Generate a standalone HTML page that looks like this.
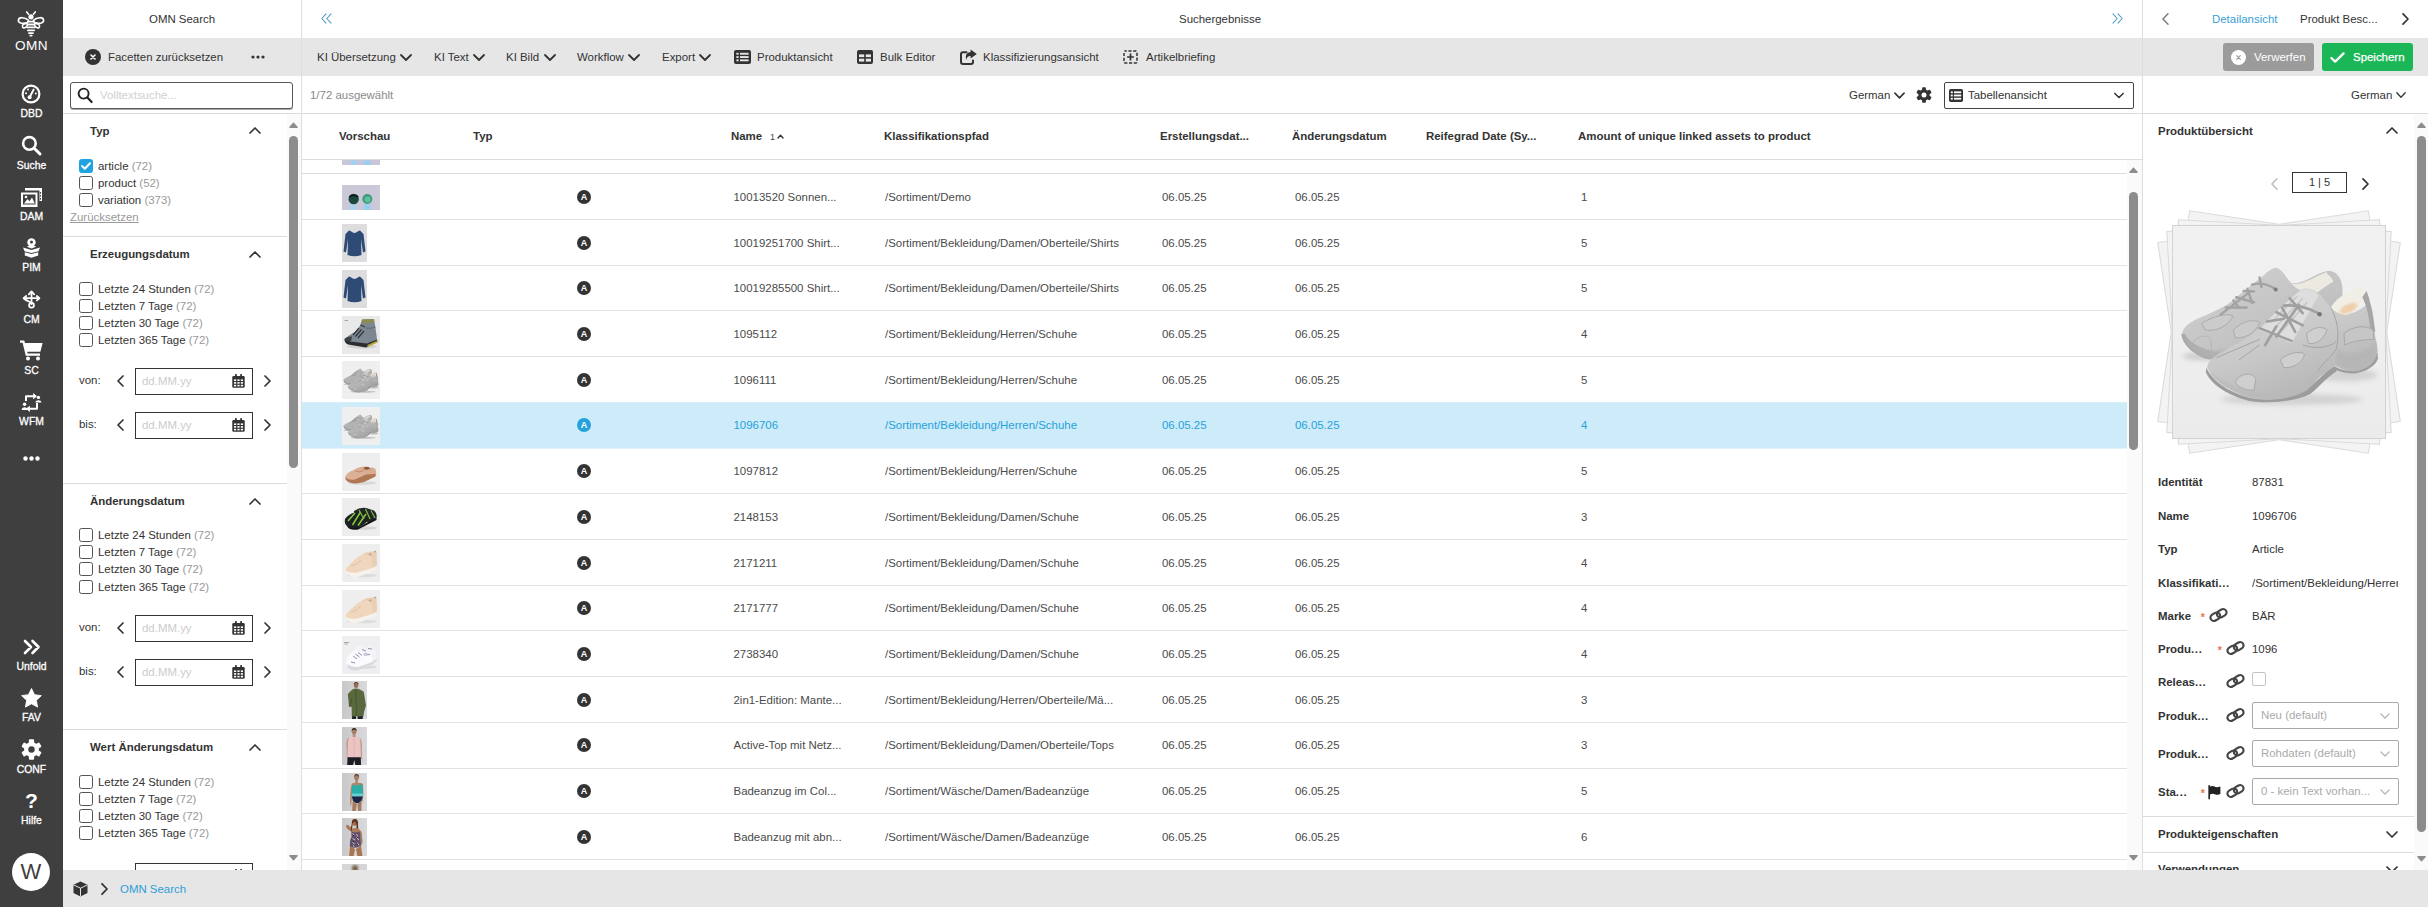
<!DOCTYPE html>
<html lang="de">
<head>
<meta charset="utf-8">
<title>OMN Search</title>
<style>
*{box-sizing:border-box;margin:0;padding:0}
html,body{width:2428px;height:907px;overflow:hidden;background:#fff}
body{font-family:"Liberation Sans",sans-serif;font-size:11.45px;color:#333;position:relative}
.abs{position:absolute}
.t{position:absolute;white-space:nowrap;line-height:14px;height:14px}
.b{font-weight:bold}
.g{color:#999}
svg{position:absolute;overflow:visible}
#sb{position:absolute;left:0;top:0;width:63px;height:907px;background:#3f3f3f;color:#fff}
#sb .l{position:absolute;left:0;width:63px;text-align:center;font-size:10.4px;line-height:13px;color:#fff;-webkit-text-stroke:.3px #fff}
#topline{position:absolute;left:63px;top:0;width:2365px;height:38px;background:#fff}
#toolbar{position:absolute;left:63px;top:38px;width:2365px;height:38px;background:#e6e6e6}
#bottom{position:absolute;left:63px;top:870px;width:2365px;height:37px;background:#e6e6e6}
.vline{position:absolute;top:0;width:1px;height:870px;background:#dedede}
.hline{position:absolute;height:1px;background:#dcdcdc}
.cb{position:absolute;width:14px;height:14px;border:1px solid #555;border-radius:2.5px;background:#fff}
.cb.on{background:#1ea3e0;border-color:#1ea3e0}
.dbox{position:absolute;left:135px;width:118px;height:27px;border:1px solid #333;background:#fff}
.row{position:absolute;left:302px;width:1825px;height:46px;border-bottom:1px solid #e2e2e2;color:#4a4a4a}
.row.sel{background:#cdebf8;color:#26a2db;border-bottom-color:#e4f1f7;box-shadow:0 -1px 0 #d9eef8}
.tyi{position:absolute;left:275px;top:15px;width:14px;height:14px;border-radius:50%;background:#333;color:#fff;font-size:9px;font-weight:bold;line-height:14px;text-align:center}
.row.sel .tyi{background:#26a2db}
.th{position:absolute;font-weight:bold;white-space:nowrap;top:129px;line-height:14px}
.sel2{position:absolute;left:2252px;width:147px;height:27px;border:1px solid #aaa;border-radius:2px;background:#fff;color:#aaa;line-height:25px;padding-left:8px}
</style>
</head>
<body>
<div id="topline"></div>
<div id="toolbar"></div>
<div id="bottom"><svg style="left:10px;top:11px" width="15" height="16" viewBox="0 0 15 16"><path d="M7.500 .5 L14.500 3.800 V12 L7.500 15.500 L.5 12 V3.800 Z" fill="#333"/><path d="M.8 4 L7.500 7.200 L14.200 4 M7.500 7.200 V15.200" stroke="#e6e6e6" stroke-width="1" fill="none"/></svg><svg style="left:38px;top:13px" width="7" height="12" viewBox="0 0 7 12" fill="none" stroke="#333" stroke-width="1.8" stroke-linecap="round" stroke-linejoin="round"><path d="M1 .8 L6 6 L1 11.2"/></svg><div class="t" style="left:57px;top:12px;color:#2d9fd6">OMN Search</div></div>
<div id="sb">
<svg style="left:17px;top:11px" width="28" height="27" viewBox="0 0 30 29" preserveAspectRatio="none" fill="none" stroke="#fff" stroke-width="1.700" stroke-linecap="round">
<path d="M12.400 3.400 L10.400 1 M17.600 3.400 L19.600 1"/>
<circle cx="15" cy="6.200" r="2.800" fill="#fff" stroke="none"/>
<path d="M12.500 10 C8.500 6.500 2 6 1.500 9.800 C1.100 13.200 6.500 14.200 11.500 12.400"/>
<path d="M17.500 10 C21.500 6.500 28 6 28.500 9.800 C28.900 13.200 23.500 14.200 18.500 12.400"/>
<path d="M11 13 C7.500 13.300 5 15 6 17.200 C7 19 9.800 18 11 15.800"/>
<path d="M19 13 C22.500 13.300 25 15 24 17.200 C23 19 20.200 18 19 15.800"/>
<path d="M11.600 11.400 H18.400 M11 14.500 H19 M11 17.600 H19 M11.600 20.700 H18.400 M12.800 23.700 H17.200 M14.200 26.400 H15.800" stroke-width="1.900"/>
</svg>
<div class="l" style="top:38px;font-size:13.6px;line-height:16px;letter-spacing:.5px;-webkit-text-stroke:0">OMN</div>
<svg style="left:21px;top:84px" width="20" height="20" viewBox="0 0 20 20" fill="none" stroke="#fff">
<circle cx="10" cy="10" r="8.4" stroke-width="2.2"/>
<path d="M8.8 13 L12.6 5.6" stroke-width="2" stroke-linecap="round"/>
<circle cx="8.6" cy="13.2" r="2" fill="#fff" stroke="none"/>
<circle cx="5" cy="9.2" r="1" fill="#fff" stroke="none"/><circle cx="7" cy="5.6" r="1" fill="#fff" stroke="none"/><circle cx="14.8" cy="9.4" r="1" fill="#fff" stroke="none"/>
</svg>
<div class="l" style="top:107px">DBD</div>
<svg style="left:21px;top:135px" width="21" height="21" viewBox="0 0 21 21" fill="none" stroke="#fff" stroke-linecap="round">
<circle cx="8.4" cy="8.4" r="6.3" stroke-width="2.6"/><path d="M13.2 13.2 L19 19" stroke-width="3"/>
</svg>
<div class="l" style="top:158.500px">Suche</div>
<svg style="left:21px;top:188px" width="21" height="19" viewBox="0 0 21 19" fill="#fff">
<path d="M4 0 H21 V13 H18.5 V2.5 H4 Z"/>
<path d="M0 4.5 H16.5 V19 H0 Z M2 6.5 V16.5 H14.5 V6.5 Z" fill-rule="evenodd"/>
<path d="M3 15.5 L6.5 11 L8.5 13.2 L11 9.5 L13.8 15.5 Z"/><circle cx="5" cy="9" r="1.3"/>
<rect x="19" y="4" width="1" height="1.6" fill="#3f3f3f"/><rect x="19" y="7" width="1" height="1.6" fill="#3f3f3f"/><rect x="19" y="10" width="1" height="1.6" fill="#3f3f3f"/>
</svg>
<div class="l" style="top:209.500px">DAM</div>
<svg style="left:22px;top:238px" width="19" height="20" viewBox="0 0 19 20" fill="#fff">
<circle cx="9.5" cy="4.4" r="4.2"/><circle cx="9.5" cy="4" r="1.5" fill="#3f3f3f"/>
<path d="M1 9.5 L9.5 12 L18 9.5 L16.5 13.2 L9.5 15 L2.5 13.2 Z"/>
<path d="M2.8 14.2 L9.5 16 L16.2 14.2 V17.6 L9.5 19.8 L2.8 17.6 Z"/>
<path d="M5.5 9 L9.5 10.4 L13.5 9 L13.5 8 L5.5 8Z"/>
</svg>
<div class="l" style="top:260.500px">PIM</div>
<svg style="left:22px;top:290px" width="19" height="19" viewBox="0 0 19 19" fill="none" stroke="#fff" stroke-width="1.8" stroke-linecap="round" stroke-linejoin="round">
<path d="M9.5 2 V14"/><path d="M6.8 4.4 L9.5 1.4 L12.2 4.4" /><path d="M2.2 8.2 H16.8"/><path d="M4.2 6 L1.6 8.2 L4.2 10.4 M14.8 6 L17.4 8.2 L14.8 10.4"/>
<circle cx="9.5" cy="15.2" r="2.4"/>
<path d="M4 8.5 C4 12 9 11 9.2 13"/>
</svg>
<div class="l" style="top:312.500px">CM</div>
<svg style="left:20px;top:340px" width="23" height="21" viewBox="0 0 23 21" fill="#fff">
<path d="M0 0.6 H4.2 L5 3 H22.6 L20.4 11.8 H7.2 L7.6 13.6 H20 V15.8 H5.8 L2.6 2.8 H0 Z"/>
<circle cx="8" cy="18.6" r="2"/><circle cx="18" cy="18.6" r="2"/>
</svg>
<div class="l" style="top:363.500px">SC</div>
<svg style="left:21px;top:393px" width="21" height="19" viewBox="0 0 21 19" fill="none" stroke="#fff" stroke-width="2" stroke-linejoin="round">
<path d="M5 8 V3.2 H14.5"/><path d="M12.2 0.6 L15.4 3.2 L12.2 5.8" fill="#fff" stroke-width="1"/>
<path d="M16 10 V15.8 H6.5"/><path d="M8.8 13.2 L5.6 15.8 L8.8 18.4" fill="#fff" stroke-width="1"/>
<circle cx="3.6" cy="11.2" r="1.7" fill="#fff" stroke="none"/><path d="M0.6 17 C0.6 13.4 6.6 13.4 6.6 17 Z" fill="#fff" stroke="none"/>
<circle cx="17.4" cy="4.4" r="1.7" fill="#fff" stroke="none"/><path d="M14.4 9.6 C14.4 6.4 20.4 6.4 20.4 9.6 Z" fill="#fff" stroke="none"/>
</svg>
<div class="l" style="top:414.500px">WFM</div>
<svg style="left:23px;top:456px" width="17" height="5" viewBox="0 0 17 5" fill="#fff"><circle cx="2.5" cy="2.5" r="2.2"/><circle cx="8.5" cy="2.5" r="2.2"/><circle cx="14.5" cy="2.5" r="2.2"/></svg>
<svg style="left:23px;top:639px" width="17" height="16" viewBox="0 0 17 16" fill="none" stroke="#fff" stroke-width="2.6" stroke-linecap="round" stroke-linejoin="round"><path d="M2 2 L8 8 L2 14 M9.5 2 L15.5 8 L9.5 14"/></svg>
<div class="l" style="top:660px">Unfold</div>
<svg style="left:21px;top:688px" width="21" height="20" viewBox="0 0 23 22" fill="#fff"><path d="M11.5 0.6 L14.8 7.4 L22.3 8.4 L16.8 13.6 L18.2 21 L11.5 17.4 L4.8 21 L6.2 13.6 L0.7 8.4 L8.2 7.4 Z" stroke="#fff" stroke-width="1" stroke-linejoin="round"/></svg>
<div class="l" style="top:711px">FAV</div>
<svg style="left:21px;top:739px" width="21" height="21" viewBox="-10.5 -10.5 21 21" fill="#fff">
<g><rect x="-2.6" y="-10.2" width="5.2" height="20.4" rx="1"/><rect x="-2.6" y="-10.2" width="5.2" height="20.4" rx="1" transform="rotate(60)"/><rect x="-2.6" y="-10.2" width="5.2" height="20.4" rx="1" transform="rotate(120)"/></g>
<circle r="7.4"/><circle r="3.2" fill="#3f3f3f"/>
</svg>
<div class="l" style="top:762.500px">CONF</div>
<div class="l" style="top:789px;font-size:21px;line-height:24px;font-weight:bold;-webkit-text-stroke:0">?</div>
<div class="l" style="top:814px">Hilfe</div>
<div class="abs" style="left:12px;top:853px;width:38px;height:38px;border-radius:50%;background:#fff;color:#3f3f3f;text-align:center;font-size:22px;line-height:38px">W</div>
</div>
<div class="vline" style="left:301px"></div>
<div class="vline" style="left:2142px"></div>
<div class="hline" style="left:63px;top:113px;width:2365px"></div>
<div id="left" class="abs" style="left:0;top:0;width:301px;height:870px;overflow:hidden"><div class="t" style="left:149px;top:12px">OMN Search</div>
<div class="abs" style="left:85px;top:49px;width:16px;height:16px;border-radius:50%;background:#333"></div>
<svg style="left:90px;top:54px" width="6" height="6" viewBox="0 0 6 6" stroke="#fff" stroke-width="1.6" stroke-linecap="round"><path d="M1 1 L5 5 M5 1 L1 5"/></svg>
<div class="t" style="left:108px;top:50px">Facetten zurücksetzen</div>
<svg style="left:251px;top:55px" width="14" height="4" viewBox="0 0 14 4" fill="#333"><circle cx="2" cy="2" r="1.6"/><circle cx="7" cy="2" r="1.6"/><circle cx="12" cy="2" r="1.6"/></svg>
<div class="abs" style="left:70px;top:82px;width:223px;height:27px;border:1px solid #585858;border-radius:3px;background:#fff;box-shadow:0 1px 0 #aaa"></div>
<svg style="left:77px;top:87px" width="16" height="17" viewBox="0 0 16 17" fill="none" stroke="#222" stroke-linecap="round"><circle cx="6.6" cy="6.6" r="5" stroke-width="1.9"/><path d="M10.4 10.6 L14.6 15" stroke-width="2.2"/></svg>
<div class="t" style="left:100px;top:88px;color:#d0d0d0">Volltextsuche...</div>
<div class="abs" style="left:287px;top:114px;width:14px;height:756px;background:#fafafa"></div>
<div class="abs" style="left:289px;top:136px;width:9px;height:332px;border-radius:4.5px;background:#8c8c8c"></div>
<svg style="left:289px;top:122px" width="9" height="6" viewBox="0 0 9 6" fill="#8c8c8c"><path d="M4.5 0.3 L8.8 5 Q8.8 6 8 6 H1 Q.2 6 .2 5 Z"/></svg>
<svg style="left:289px;top:855px" width="9" height="6" viewBox="0 0 9 6" fill="#8c8c8c"><path d="M4.5 5.7 L8.8 1 Q8.8 0 8 0 H1 Q.2 0 .2 1 Z"/></svg>
<div class="t b" style="left:90px;top:124px">Typ</div>
<svg style="left:249px;top:127px" width="12" height="7" viewBox="0 0 12 7" fill="none" stroke="#333" stroke-width="1.7" stroke-linecap="round" stroke-linejoin="round"><path d="M1 6 L6 1 L11 6"/></svg>
<div class="cb on" style="left:79px;top:159px"></div><svg style="left:81px;top:162px" width="10" height="8" viewBox="0 0 10 8" fill="none" stroke="#fff" stroke-width="2" stroke-linecap="round" stroke-linejoin="round"><path d="M1 4 L3.8 6.8 L9 1.2"/></svg>
<div class="t" style="left:98px;top:159px">article <span class="g">(72)</span></div>
<div class="cb" style="left:79px;top:176px"></div>
<div class="t" style="left:98px;top:176px">product <span class="g">(52)</span></div>
<div class="cb" style="left:79px;top:193px"></div>
<div class="t" style="left:98px;top:193px">variation <span class="g">(373)</span></div>
<div class="t g" style="left:70px;top:210px;text-decoration:underline">Zurücksetzen</div>
<div class="hline" style="left:63px;top:236px;width:224px"></div>
<div class="t b" style="left:90px;top:247px">Erzeugungsdatum</div>
<svg style="left:249px;top:251px" width="12" height="7" viewBox="0 0 12 7" fill="none" stroke="#333" stroke-width="1.7" stroke-linecap="round" stroke-linejoin="round"><path d="M1 6 L6 1 L11 6"/></svg>
<div class="cb" style="left:79px;top:281.5px"></div>
<div class="t" style="left:98px;top:281.5px">Letzte 24 Stunden <span class="g">(72)</span></div>
<div class="cb" style="left:79px;top:298.6px"></div>
<div class="t" style="left:98px;top:298.6px">Letzten 7 Tage <span class="g">(72)</span></div>
<div class="cb" style="left:79px;top:315.7px"></div>
<div class="t" style="left:98px;top:315.7px">Letzten 30 Tage <span class="g">(72)</span></div>
<div class="cb" style="left:79px;top:332.8px"></div>
<div class="t" style="left:98px;top:332.8px">Letzten 365 Tage <span class="g">(72)</span></div>
<div class="t" style="left:79px;top:373px">von:</div>
<svg style="left:117px;top:375px" width="7" height="12" viewBox="0 0 7 12" fill="none" stroke="#333" stroke-width="1.7" stroke-linecap="round" stroke-linejoin="round"><path d="M6 1 L1 6 L6 11"/></svg>
<div class="dbox" style="top:368px"></div>
<div class="t" style="left:142px;top:374px;color:#ccc">dd.MM.yy</div>
<svg style="left:232px;top:374px" width="13" height="14" viewBox="0 0 13 14"><rect x=".3" y="2" width="12.400" height="11.800" rx="1.300" fill="#333"/><rect x="3" y="0" width="1.8" height="3.4" rx=".6" fill="#333"/><rect x="8.2" y="0" width="1.8" height="3.4" rx=".6" fill="#333"/><g fill="#fff"><rect x="2" y="5.400" width="2.200" height="1.600"/><rect x="5.400" y="5.400" width="2.200" height="1.600"/><rect x="8.800" y="5.400" width="2.200" height="1.600"/><rect x="2" y="8.100" width="2.200" height="1.600"/><rect x="5.400" y="8.100" width="2.200" height="1.600"/><rect x="8.800" y="8.100" width="2.200" height="1.600"/><rect x="2" y="10.800" width="2.200" height="1.600"/><rect x="5.400" y="10.800" width="2.200" height="1.600"/><rect x="8.800" y="10.800" width="2.200" height="1.600"/></g></svg>
<svg style="left:264px;top:375px" width="7" height="12" viewBox="0 0 7 12" fill="none" stroke="#333" stroke-width="1.7" stroke-linecap="round" stroke-linejoin="round"><path d="M1 1 L6 6 L1 11"/></svg>
<div class="t" style="left:79px;top:417px">bis:</div>
<svg style="left:117px;top:419px" width="7" height="12" viewBox="0 0 7 12" fill="none" stroke="#333" stroke-width="1.7" stroke-linecap="round" stroke-linejoin="round"><path d="M6 1 L1 6 L6 11"/></svg>
<div class="dbox" style="top:412px"></div>
<div class="t" style="left:142px;top:418px;color:#ccc">dd.MM.yy</div>
<svg style="left:232px;top:418px" width="13" height="14" viewBox="0 0 13 14"><rect x=".3" y="2" width="12.400" height="11.800" rx="1.300" fill="#333"/><rect x="3" y="0" width="1.8" height="3.4" rx=".6" fill="#333"/><rect x="8.2" y="0" width="1.8" height="3.4" rx=".6" fill="#333"/><g fill="#fff"><rect x="2" y="5.400" width="2.200" height="1.600"/><rect x="5.400" y="5.400" width="2.200" height="1.600"/><rect x="8.800" y="5.400" width="2.200" height="1.600"/><rect x="2" y="8.100" width="2.200" height="1.600"/><rect x="5.400" y="8.100" width="2.200" height="1.600"/><rect x="8.800" y="8.100" width="2.200" height="1.600"/><rect x="2" y="10.800" width="2.200" height="1.600"/><rect x="5.400" y="10.800" width="2.200" height="1.600"/><rect x="8.800" y="10.800" width="2.200" height="1.600"/></g></svg>
<svg style="left:264px;top:419px" width="7" height="12" viewBox="0 0 7 12" fill="none" stroke="#333" stroke-width="1.7" stroke-linecap="round" stroke-linejoin="round"><path d="M1 1 L6 6 L1 11"/></svg>
<div class="hline" style="left:63px;top:483px;width:224px"></div>
<div class="t b" style="left:90px;top:494px">Änderungsdatum</div>
<svg style="left:249px;top:498px" width="12" height="7" viewBox="0 0 12 7" fill="none" stroke="#333" stroke-width="1.7" stroke-linecap="round" stroke-linejoin="round"><path d="M1 6 L6 1 L11 6"/></svg>
<div class="cb" style="left:79px;top:528.2px"></div>
<div class="t" style="left:98px;top:528.2px">Letzte 24 Stunden <span class="g">(72)</span></div>
<div class="cb" style="left:79px;top:545.3px"></div>
<div class="t" style="left:98px;top:545.3px">Letzten 7 Tage <span class="g">(72)</span></div>
<div class="cb" style="left:79px;top:562.4px"></div>
<div class="t" style="left:98px;top:562.4px">Letzten 30 Tage <span class="g">(72)</span></div>
<div class="cb" style="left:79px;top:579.5px"></div>
<div class="t" style="left:98px;top:579.5px">Letzten 365 Tage <span class="g">(72)</span></div>
<div class="t" style="left:79px;top:620px">von:</div>
<svg style="left:117px;top:622px" width="7" height="12" viewBox="0 0 7 12" fill="none" stroke="#333" stroke-width="1.7" stroke-linecap="round" stroke-linejoin="round"><path d="M6 1 L1 6 L6 11"/></svg>
<div class="dbox" style="top:615px"></div>
<div class="t" style="left:142px;top:621px;color:#ccc">dd.MM.yy</div>
<svg style="left:232px;top:621px" width="13" height="14" viewBox="0 0 13 14"><rect x=".3" y="2" width="12.400" height="11.800" rx="1.300" fill="#333"/><rect x="3" y="0" width="1.8" height="3.4" rx=".6" fill="#333"/><rect x="8.2" y="0" width="1.8" height="3.4" rx=".6" fill="#333"/><g fill="#fff"><rect x="2" y="5.400" width="2.200" height="1.600"/><rect x="5.400" y="5.400" width="2.200" height="1.600"/><rect x="8.800" y="5.400" width="2.200" height="1.600"/><rect x="2" y="8.100" width="2.200" height="1.600"/><rect x="5.400" y="8.100" width="2.200" height="1.600"/><rect x="8.800" y="8.100" width="2.200" height="1.600"/><rect x="2" y="10.800" width="2.200" height="1.600"/><rect x="5.400" y="10.800" width="2.200" height="1.600"/><rect x="8.800" y="10.800" width="2.200" height="1.600"/></g></svg>
<svg style="left:264px;top:622px" width="7" height="12" viewBox="0 0 7 12" fill="none" stroke="#333" stroke-width="1.7" stroke-linecap="round" stroke-linejoin="round"><path d="M1 1 L6 6 L1 11"/></svg>
<div class="t" style="left:79px;top:664px">bis:</div>
<svg style="left:117px;top:666px" width="7" height="12" viewBox="0 0 7 12" fill="none" stroke="#333" stroke-width="1.7" stroke-linecap="round" stroke-linejoin="round"><path d="M6 1 L1 6 L6 11"/></svg>
<div class="dbox" style="top:659px"></div>
<div class="t" style="left:142px;top:665px;color:#ccc">dd.MM.yy</div>
<svg style="left:232px;top:665px" width="13" height="14" viewBox="0 0 13 14"><rect x=".3" y="2" width="12.400" height="11.800" rx="1.300" fill="#333"/><rect x="3" y="0" width="1.8" height="3.4" rx=".6" fill="#333"/><rect x="8.2" y="0" width="1.8" height="3.4" rx=".6" fill="#333"/><g fill="#fff"><rect x="2" y="5.400" width="2.200" height="1.600"/><rect x="5.400" y="5.400" width="2.200" height="1.600"/><rect x="8.800" y="5.400" width="2.200" height="1.600"/><rect x="2" y="8.100" width="2.200" height="1.600"/><rect x="5.400" y="8.100" width="2.200" height="1.600"/><rect x="8.800" y="8.100" width="2.200" height="1.600"/><rect x="2" y="10.800" width="2.200" height="1.600"/><rect x="5.400" y="10.800" width="2.200" height="1.600"/><rect x="8.800" y="10.800" width="2.200" height="1.600"/></g></svg>
<svg style="left:264px;top:666px" width="7" height="12" viewBox="0 0 7 12" fill="none" stroke="#333" stroke-width="1.7" stroke-linecap="round" stroke-linejoin="round"><path d="M1 1 L6 6 L1 11"/></svg>
<div class="hline" style="left:63px;top:729px;width:224px"></div>
<div class="t b" style="left:90px;top:740px">Wert Änderungsdatum</div>
<svg style="left:249px;top:744px" width="12" height="7" viewBox="0 0 12 7" fill="none" stroke="#333" stroke-width="1.7" stroke-linecap="round" stroke-linejoin="round"><path d="M1 6 L6 1 L11 6"/></svg>
<div class="cb" style="left:79px;top:774.9px"></div>
<div class="t" style="left:98px;top:774.9px">Letzte 24 Stunden <span class="g">(72)</span></div>
<div class="cb" style="left:79px;top:792.0px"></div>
<div class="t" style="left:98px;top:792.0px">Letzten 7 Tage <span class="g">(72)</span></div>
<div class="cb" style="left:79px;top:809.1px"></div>
<div class="t" style="left:98px;top:809.1px">Letzten 30 Tage <span class="g">(72)</span></div>
<div class="cb" style="left:79px;top:826.2px"></div>
<div class="t" style="left:98px;top:826.2px">Letzten 365 Tage <span class="g">(72)</span></div>
<div class="t" style="left:79px;top:868px">von:</div>
<svg style="left:117px;top:870px" width="7" height="12" viewBox="0 0 7 12" fill="none" stroke="#333" stroke-width="1.7" stroke-linecap="round" stroke-linejoin="round"><path d="M6 1 L1 6 L6 11"/></svg>
<div class="dbox" style="top:863px"></div>
<div class="t" style="left:142px;top:869px;color:#ccc">dd.MM.yy</div>
<svg style="left:232px;top:869px" width="13" height="14" viewBox="0 0 13 14"><rect x=".3" y="2" width="12.400" height="11.800" rx="1.300" fill="#333"/><rect x="3" y="0" width="1.8" height="3.4" rx=".6" fill="#333"/><rect x="8.2" y="0" width="1.8" height="3.4" rx=".6" fill="#333"/><g fill="#fff"><rect x="2" y="5.400" width="2.200" height="1.600"/><rect x="5.400" y="5.400" width="2.200" height="1.600"/><rect x="8.800" y="5.400" width="2.200" height="1.600"/><rect x="2" y="8.100" width="2.200" height="1.600"/><rect x="5.400" y="8.100" width="2.200" height="1.600"/><rect x="8.800" y="8.100" width="2.200" height="1.600"/><rect x="2" y="10.800" width="2.200" height="1.600"/><rect x="5.400" y="10.800" width="2.200" height="1.600"/><rect x="8.800" y="10.800" width="2.200" height="1.600"/></g></svg>
<svg style="left:264px;top:870px" width="7" height="12" viewBox="0 0 7 12" fill="none" stroke="#333" stroke-width="1.7" stroke-linecap="round" stroke-linejoin="round"><path d="M1 1 L6 6 L1 11"/></svg>
<div class="t" style="left:79px;top:912px">bis:</div>
<svg style="left:117px;top:914px" width="7" height="12" viewBox="0 0 7 12" fill="none" stroke="#333" stroke-width="1.7" stroke-linecap="round" stroke-linejoin="round"><path d="M6 1 L1 6 L6 11"/></svg>
<div class="dbox" style="top:907px"></div>
<div class="t" style="left:142px;top:913px;color:#ccc">dd.MM.yy</div>
<svg style="left:232px;top:913px" width="13" height="14" viewBox="0 0 13 14"><rect x=".3" y="2" width="12.400" height="11.800" rx="1.300" fill="#333"/><rect x="3" y="0" width="1.8" height="3.4" rx=".6" fill="#333"/><rect x="8.2" y="0" width="1.8" height="3.4" rx=".6" fill="#333"/><g fill="#fff"><rect x="2" y="5.400" width="2.200" height="1.600"/><rect x="5.400" y="5.400" width="2.200" height="1.600"/><rect x="8.800" y="5.400" width="2.200" height="1.600"/><rect x="2" y="8.100" width="2.200" height="1.600"/><rect x="5.400" y="8.100" width="2.200" height="1.600"/><rect x="8.800" y="8.100" width="2.200" height="1.600"/><rect x="2" y="10.800" width="2.200" height="1.600"/><rect x="5.400" y="10.800" width="2.200" height="1.600"/><rect x="8.800" y="10.800" width="2.200" height="1.600"/></g></svg>
<svg style="left:264px;top:914px" width="7" height="12" viewBox="0 0 7 12" fill="none" stroke="#333" stroke-width="1.7" stroke-linecap="round" stroke-linejoin="round"><path d="M1 1 L6 6 L1 11"/></svg></div>
<div id="main" class="abs" style="left:0;top:0;width:2142px;height:870px;overflow:hidden;pointer-events:none"><svg style="left:321px;top:13px" width="11" height="11" viewBox="0 0 11 11" fill="none" stroke="#4a9cc6" stroke-width="1.05" stroke-linecap="round" stroke-linejoin="round"><path d="M5 0.8 L0.8 5.5 L5 10.2 M10 0.8 L5.8 5.5 L10 10.2"/></svg>
<div class="t" style="left:1179px;top:12px">Suchergebnisse</div>
<svg style="left:2112px;top:13px" width="11" height="11" viewBox="0 0 11 11" fill="none" stroke="#4a9cc6" stroke-width="1.05" stroke-linecap="round" stroke-linejoin="round"><path d="M1 0.8 L5.2 5.5 L1 10.2 M6 0.8 L10.2 5.5 L6 10.2"/></svg>
<div class="t" style="left:317px;top:50px">KI Übersetzung</div>
<svg style="left:400px;top:54px" width="12" height="7" viewBox="0 0 12 7" fill="none" stroke="#333" stroke-width="1.8" stroke-linecap="round" stroke-linejoin="round"><path d="M1 1 L6 6 L11 1"/></svg>
<div class="t" style="left:434px;top:50px">KI Text</div>
<svg style="left:473px;top:54px" width="12" height="7" viewBox="0 0 12 7" fill="none" stroke="#333" stroke-width="1.8" stroke-linecap="round" stroke-linejoin="round"><path d="M1 1 L6 6 L11 1"/></svg>
<div class="t" style="left:506px;top:50px">KI Bild</div>
<svg style="left:544px;top:54px" width="12" height="7" viewBox="0 0 12 7" fill="none" stroke="#333" stroke-width="1.8" stroke-linecap="round" stroke-linejoin="round"><path d="M1 1 L6 6 L11 1"/></svg>
<div class="t" style="left:577px;top:50px">Workflow</div>
<svg style="left:628px;top:54px" width="12" height="7" viewBox="0 0 12 7" fill="none" stroke="#333" stroke-width="1.8" stroke-linecap="round" stroke-linejoin="round"><path d="M1 1 L6 6 L11 1"/></svg>
<div class="t" style="left:662px;top:50px">Export</div>
<svg style="left:699px;top:54px" width="12" height="7" viewBox="0 0 12 7" fill="none" stroke="#333" stroke-width="1.8" stroke-linecap="round" stroke-linejoin="round"><path d="M1 1 L6 6 L11 1"/></svg>
<svg style="left:734px;top:50px" width="17" height="14" viewBox="0 0 17 14"><rect x="0" y="0" width="17" height="14" rx="2" fill="#333"/><g fill="#e6e6e6"><rect x="2.4" y="2.8" width="2.2" height="1.9"/><rect x="6" y="2.8" width="8.6" height="1.9"/><rect x="2.4" y="6.1" width="2.2" height="1.9"/><rect x="6" y="6.1" width="8.6" height="1.9"/><rect x="2.4" y="9.4" width="2.2" height="1.9"/><rect x="6" y="9.4" width="8.6" height="1.9"/></g></svg>
<div class="t" style="left:757px;top:50px">Produktansicht</div>
<svg style="left:857px;top:50px" width="16" height="14" viewBox="0 0 16 14"><rect x="0" y="0" width="16" height="14" rx="2" fill="#333"/><g fill="#e6e6e6"><rect x="2" y="4.4" width="5.2" height="2.7"/><rect x="8.8" y="4.4" width="5.2" height="2.7"/><rect x="2" y="8.7" width="5.2" height="2.9"/><rect x="8.8" y="8.7" width="5.2" height="2.9"/></g></svg>
<div class="t" style="left:880px;top:50px">Bulk Editor</div>
<svg style="left:960px;top:49px" width="17" height="16" viewBox="0 0 17 16"><path d="M6.5 3.2 H3 Q1 3.2 1 5.2 V13 Q1 15 3 15 H11 Q13 15 13 13 V11.6" fill="none" stroke="#333" stroke-width="2" stroke-linecap="round"/><path d="M10.6 0.4 L16.8 5 L10.6 9.6 V6.9 Q6.8 6.8 6.4 11 Q4.2 3.6 10.6 3.1 Z" fill="#333"/></svg>
<div class="t" style="left:983px;top:50px">Klassifizierungsansicht</div>
<svg style="left:1123px;top:50px" width="15" height="14" viewBox="0 0 15 14"><rect x="1" y="1" width="13" height="12" rx="1.2" fill="none" stroke="#333" stroke-width="1.5" stroke-dasharray="3.2 1.6" stroke-dashoffset="1.6"/><path d="M7.5 3.6 V10.4 M4.1 7 H10.9" stroke="#333" stroke-width="1.7"/></svg>
<div class="t" style="left:1146px;top:50px">Artikelbriefing</div>
<div class="t g" style="left:310px;top:88px;color:#8a8a8a">1/72 ausgewählt</div>
<div class="t" style="left:1849px;top:88px">German</div>
<svg style="left:1894px;top:92px" width="11" height="7" viewBox="0 0 12 7" fill="none" stroke="#333" stroke-width="1.8" stroke-linecap="round" stroke-linejoin="round"><path d="M1 1 L6 6 L11 1"/></svg>
<svg style="left:1916px;top:87px" width="16" height="16" viewBox="-8 -8 16 16" fill="#333"><rect x="-1.9" y="-7.8" width="3.8" height="15.6" rx=".8"/><rect x="-1.9" y="-7.8" width="3.8" height="15.6" rx=".8" transform="rotate(60)"/><rect x="-1.9" y="-7.8" width="3.8" height="15.6" rx=".8" transform="rotate(120)"/><circle r="5.7"/><circle r="2.5" fill="#fff"/></svg>
<div class="abs" style="left:1944px;top:82px;width:190px;height:27px;border:1px solid #444;border-radius:2px;background:#fff"></div>
<svg style="left:1949px;top:89px" width="14" height="13" viewBox="0 0 14 13"><rect width="14" height="13" rx="1.8" fill="#333"/><g fill="#fff"><rect x="1.8" y="2.4" width="2" height="1.8"/><rect x="5" y="2.4" width="7.2" height="1.8"/><rect x="1.8" y="5.6" width="2" height="1.8"/><rect x="5" y="5.6" width="7.2" height="1.8"/><rect x="1.8" y="8.8" width="2" height="1.8"/><rect x="5" y="8.8" width="7.2" height="1.8"/></g></svg>
<div class="t" style="left:1968px;top:88px">Tabellenansicht</div>
<svg style="left:2114px;top:92px" width="10" height="7" viewBox="0 0 12 7" fill="none" stroke="#333" stroke-width="1.8" stroke-linecap="round" stroke-linejoin="round"><path d="M1 1 L6 6 L11 1"/></svg>
<div class="th" style="left:339px">Vorschau</div>
<div class="th" style="left:473px">Typ</div>
<div class="th" style="left:731px">Name</div>
<div class="th" style="left:884px">Klassifikationspfad</div>
<div class="th" style="left:1160px">Erstellungsdat...</div>
<div class="th" style="left:1292px">Änderungsdatum</div>
<div class="th" style="left:1426px">Reifegrad Date (Sy...</div>
<div class="th" style="left:1578px">Amount of unique linked assets to product</div>
<div class="t" style="left:770px;top:130px;font-size:9px;color:#444">1</div>
<svg style="left:777px;top:134px" width="7" height="5" viewBox="0 0 7 5" fill="none" stroke="#333" stroke-width="1.4" stroke-linecap="round" stroke-linejoin="round"><path d="M1 4 L3.5 1.2 L6 4"/></svg>
<div class="hline" style="left:302px;top:159px;width:1840px"></div>
<div class="abs" style="left:2127px;top:160px;width:15px;height:710px;background:#fafafa"></div>
<div class="abs" style="left:2129px;top:192px;width:9px;height:258px;border-radius:4.5px;background:#8c8c8c"></div>
<svg style="left:2129px;top:167px" width="9" height="6" viewBox="0 0 9 6" fill="#8c8c8c"><path d="M4.5 0.3 L8.8 5 Q8.8 6 8 6 H1 Q.2 6 .2 5 Z"/></svg>
<svg style="left:2129px;top:855px" width="9" height="6" viewBox="0 0 9 6" fill="#8c8c8c"><path d="M4.5 5.7 L8.8 1 Q8.8 0 8 0 H1 Q.2 0 .2 1 Z"/></svg>
<svg width="0" height="0" style="left:0;top:0"><defs><filter id="f4" x="-10%" y="-10%" width="120%" height="120%"><feGaussianBlur stdDeviation="0.55"/></filter><filter id="f5" x="-10%" y="-10%" width="120%" height="120%"><feGaussianBlur stdDeviation="0.45"/></filter><filter id="f6" x="-30%" y="-30%" width="160%" height="160%"><feGaussianBlur stdDeviation="1.3"/></filter><filter id="dk" x="0" y="0" width="100%" height="100%" color-interpolation-filters="sRGB"><feComponentTransfer><feFuncR type="linear" slope="1.05" intercept="-0.11"/><feFuncG type="linear" slope="1.05" intercept="-0.11"/><feFuncB type="linear" slope="1.05" intercept="-0.11"/></feComponentTransfer></filter></defs></svg>
<div class="abs" style="left:341.600px;top:160px;width:38px;height:5px;background:#c9c6d8;overflow:hidden"><div class="abs" style="left:9px;top:0;width:6px;height:6px;background:#9fd0f2;filter:blur(1.5px)"></div><div class="abs" style="left:22px;top:0;width:6px;height:6px;background:#8fd0f5;filter:blur(1.5px)"></div></div>
<div class="hline" style="left:302px;top:173px;width:1825px"></div>
<div class="row" style="top:174px;height:46px"><div class="tyi" style="top:16px">A</div><div class="t" style="left:431.500px;top:16px">10013520 Sonnen...</div><div class="t" style="left:583px;top:16px">/Sortiment/Demo</div><div class="t" style="left:860px;top:16px">06.05.25</div><div class="t" style="left:993px;top:16px">06.05.25</div><div class="t" style="left:1279px;top:16px">1</div></div>
<svg style="left:341.6px;top:184.8px;overflow:hidden" width="38" height="25" viewBox="0 0 38 25"><rect width="38" height="25" fill="#cbc8d8"/><g filter="url(#f6)"><rect x="8" y="19" width="6" height="7" fill="#a9d3f0"/><rect x="22" y="19" width="6" height="7" fill="#8fd0f5"/></g><g filter="url(#f4)"><circle cx="11.7" cy="14" r="5.2" fill="#1f4a3c"/><circle cx="25.3" cy="14" r="5" fill="#3f9c7c"/><circle cx="25.6" cy="14.4" r="3" fill="#5fc09c"/><path d="M7.5 12 Q11.7 8.5 16 12" stroke="#0d1f1a" stroke-width="2" fill="none"/></g></svg>
<div class="row" style="top:220px;height:46px"><div class="tyi" style="top:16px">A</div><div class="t" style="left:431.500px;top:16px">10019251700 Shirt...</div><div class="t" style="left:583px;top:16px">/Sortiment/Bekleidung/Damen/Oberteile/Shirts</div><div class="t" style="left:860px;top:16px">06.05.25</div><div class="t" style="left:993px;top:16px">06.05.25</div><div class="t" style="left:1279px;top:16px">5</div></div>
<svg style="left:341.6px;top:224.0px;overflow:hidden" width="25" height="38" viewBox="0 0 25 38"><rect width="25" height="38" fill="#dddddf"/><g filter="url(#f4)"><path d="M7 6.5 Q12.5 9 18 6.5 L21.5 10 L23.5 27.5 L21 28.5 L19 15 L19.5 31 Q12.5 33.5 5.5 31 L6 15 L4 28.5 L1.5 27.5 L3.5 10 Z" fill="#2f4b75"/><path d="M9 7 Q12.5 11 16 7" fill="#dddddf"/></g></svg>
<div class="row" style="top:266px;height:45px"><div class="tyi" style="top:15px">A</div><div class="t" style="left:431.500px;top:15px">10019285500 Shirt...</div><div class="t" style="left:583px;top:15px">/Sortiment/Bekleidung/Damen/Oberteile/Shirts</div><div class="t" style="left:860px;top:15px">06.05.25</div><div class="t" style="left:993px;top:15px">06.05.25</div><div class="t" style="left:1279px;top:15px">5</div></div>
<svg style="left:341.6px;top:269.7px;overflow:hidden" width="25" height="38" viewBox="0 0 25 38"><rect width="25" height="38" fill="#dddddf"/><g filter="url(#f4)"><path d="M7 6.5 Q12.5 9 18 6.5 L21.5 10 L23.5 27.5 L21 28.5 L19 15 L19.5 31 Q12.5 33.5 5.5 31 L6 15 L4 28.5 L1.5 27.5 L3.5 10 Z" fill="#2f4b75"/><path d="M9 7 Q12.5 11 16 7" fill="#dddddf"/></g></svg>
<div class="row" style="top:311px;height:46px"><div class="tyi" style="top:16px">A</div><div class="t" style="left:431.500px;top:16px">1095112</div><div class="t" style="left:583px;top:16px">/Sortiment/Bekleidung/Herren/Schuhe</div><div class="t" style="left:860px;top:16px">06.05.25</div><div class="t" style="left:993px;top:16px">06.05.25</div><div class="t" style="left:1279px;top:16px">4</div></div>
<svg style="left:341.6px;top:315.5px;overflow:hidden" width="38" height="38" viewBox="0 0 38 38"><rect width="38" height="38" fill="#e9e9e9"/><g filter="url(#f4)"><ellipse cx="20" cy="30.5" rx="15" ry="2" fill="#d2d2d2"/><path d="M20,3.500 L32,3 Q33.500,12 34.500,19 L35,24 L27,28 L10,28.500 Q3,27 3,22.500 Q8,18.500 13.500,15.500 Q18.500,11 20,3.500 Z" fill="#7d8792"/><path d="M2.500,22.500 Q2,26.500 6,28.500 L24,31.500 L35.500,26 L35,23.500 L25,27.500 L8,25.500 Z" fill="#2a2e33"/><path d="M25.500,29 L35.500,24.500 L35.500,26.500 L25.500,31Z" fill="#b9ab36"/><path d="M20,3.500 L32,3 L32.300,6.500 L19.300,7.500Z" fill="#8e8c52"/><path d="M3,22.500 Q6,20 10,20.500 L9,25 L4,25.500Z" fill="#3a3f45"/><path d="M11,19 L17,12 M13.500,20.500 L19.500,13.500 M16,22 L22,15 M18.500,9 L23,11" stroke="#32363b" stroke-width="1.200"/><path d="M24,12 Q29,13 33.500,11" stroke="#5d6670" stroke-width="1" fill="none"/></g><path d="M2.500 4.500 h3.500" stroke="#888" stroke-width=".7"/></svg>
<div class="row" style="top:357px;height:46px"><div class="tyi" style="top:16px">A</div><div class="t" style="left:431.500px;top:16px">1096111</div><div class="t" style="left:583px;top:16px">/Sortiment/Bekleidung/Herren/Schuhe</div><div class="t" style="left:860px;top:16px">06.05.25</div><div class="t" style="left:993px;top:16px">06.05.25</div><div class="t" style="left:1279px;top:16px">5</div></div>
<svg style="left:341.6px;top:361.2px;overflow:hidden" width="38" height="38" viewBox="0 0 38 38"><rect width="38" height="38" fill="#efefef"/><g transform="scale(0.17757)" filter="url(#dk)"><use href="#shoeg"/></g></svg>
<div class="row sel" style="top:403px;height:46px"><div class="tyi" style="top:15px">A</div><div class="t" style="left:431.500px;top:15px">1096706</div><div class="t" style="left:583px;top:15px">/Sortiment/Bekleidung/Herren/Schuhe</div><div class="t" style="left:860px;top:15px">06.05.25</div><div class="t" style="left:993px;top:15px">06.05.25</div><div class="t" style="left:1279px;top:15px">4</div></div>
<svg style="left:341.6px;top:406.9px;overflow:hidden" width="38" height="38" viewBox="0 0 38 38"><rect width="38" height="38" fill="#efefef"/><g transform="scale(0.17757)" filter="url(#dk)"><use href="#shoeg"/></g></svg>
<div class="row" style="top:449px;height:45px"><div class="tyi" style="top:15px">A</div><div class="t" style="left:431.500px;top:15px">1097812</div><div class="t" style="left:583px;top:15px">/Sortiment/Bekleidung/Herren/Schuhe</div><div class="t" style="left:860px;top:15px">06.05.25</div><div class="t" style="left:993px;top:15px">06.05.25</div><div class="t" style="left:1279px;top:15px">5</div></div>
<svg style="left:341.6px;top:452.6px;overflow:hidden" width="38" height="38" viewBox="0 0 38 38"><rect width="38" height="38" fill="#eeeeee"/><g filter="url(#f4)"><ellipse cx="20" cy="30" rx="14" ry="1.800" fill="#d8d8d8"/><path d="M9,19.500 Q13,15 19,14 Q24,12.500 28,15 Q31,13.500 33.500,16 Q35,20 33.500,23 L22,28 Q15,30 12,27 Q8,26 9,19.500Z" fill="#d9ab90"/><path d="M3.500,23 Q6,18.500 11,17.500 Q16,15.500 20,17.500 L24,19 Q21,24 14,26.500 Q8,28.500 5.500,27 Q2.500,26 3.500,23Z" fill="#dcb096"/><path d="M3.500,24.500 Q7,27.500 13,26.500 L24,21.500 L33.500,21 L33.500,23.500 L22,29 Q13,31.500 8,29.500 Q3,28 3.500,24.500Z" fill="#b07755"/><path d="M13,17.500 Q17,20.500 22,17 M21,15 Q25,18 29,15.500" stroke="#b98768" stroke-width="1" fill="none"/><path d="M22,14.500 Q25.500,13 28,15 Q25.500,17 23,16.500Z" fill="#8a5a40"/></g></svg>
<div class="row" style="top:494px;height:46px"><div class="tyi" style="top:16px">A</div><div class="t" style="left:431.500px;top:16px">2148153</div><div class="t" style="left:583px;top:16px">/Sortiment/Bekleidung/Damen/Schuhe</div><div class="t" style="left:860px;top:16px">06.05.25</div><div class="t" style="left:993px;top:16px">06.05.25</div><div class="t" style="left:1279px;top:16px">3</div></div>
<svg style="left:341.6px;top:498.3px;overflow:hidden" width="38" height="38" viewBox="0 0 38 38"><rect width="38" height="38" fill="#ededed"/><g filter="url(#f4)"><ellipse cx="20" cy="30" rx="15" ry="1.800" fill="#d4d4d4"/><path d="M12,13 Q18,9 24,10 L32,12.500 Q35.500,16 34.500,20 L30,24 L18,24 Q11,22 12,13Z" fill="#23272a"/><path d="M3,21 Q7,15.500 13,14.500 Q19,12 24,15 L27,19 Q26,24 20,27.500 L13,31 Q7,31.500 5,28 Q2,25.500 3,21Z" fill="#1d2124"/><path d="M6,23 L13,15 M10.500,27 L18.500,14 M16,27.500 L24,16" stroke="#86c93c" stroke-width="1.500"/><path d="M17,12 L22,21 M23.500,11 L28,21 M29,12.500 L33,20" stroke="#7fbf38" stroke-width="1.200"/><path d="M5,28 Q10,31.500 18,28.500 L27,23.500 L34.500,20 L34.500,22 L16,31.500 Q8,33 5,28Z" fill="#111416"/></g></svg>
<div class="row" style="top:540px;height:46px"><div class="tyi" style="top:16px">A</div><div class="t" style="left:431.500px;top:16px">2171211</div><div class="t" style="left:583px;top:16px">/Sortiment/Bekleidung/Damen/Schuhe</div><div class="t" style="left:860px;top:16px">06.05.25</div><div class="t" style="left:993px;top:16px">06.05.25</div><div class="t" style="left:1279px;top:16px">4</div></div>
<svg style="left:341.6px;top:544.1px;overflow:hidden" width="38" height="38" viewBox="0 0 38 38"><rect width="38" height="38" fill="#eeeeee"/><g filter="url(#f4)"><ellipse cx="20" cy="31.500" rx="15" ry="1.800" fill="#dcdcdc"/><path d="M20,10.500 Q25,7 31,7.500 L34.500,9 Q35,15 35,21 L34,25 L24,28 L16,26 Q14,18 20,10.500Z" fill="#e9cfb5"/><path d="M14,14.500 Q19,10 26,10.500 L29.500,12 Q30.500,18 30.500,24 L29.500,28 L15,32.500 Q8.500,33.500 7,30.500 Q2.500,29 4,24.500 Q8,20 14,14.500Z" fill="#efd6bd"/><path d="M4,26.500 Q7,29.500 15,28.500 L30.500,24 L35,21.500 L34.500,25.500 L30,28 L15.500,33 Q8,34 6.500,30.500 Q3.500,29.500 4,26.500Z" fill="#f6f2ec"/><path d="M26,10.500 L29,9 L29.500,12Z M31,7.500 L34,6.500 L34.500,9Z" fill="#c4a88c"/><path d="M9,22 Q15,21 19,16" stroke="#dcc0a4" stroke-width="1" fill="none"/></g></svg>
<div class="row" style="top:586px;height:45px"><div class="tyi" style="top:15px">A</div><div class="t" style="left:431.500px;top:15px">2171777</div><div class="t" style="left:583px;top:15px">/Sortiment/Bekleidung/Damen/Schuhe</div><div class="t" style="left:860px;top:15px">06.05.25</div><div class="t" style="left:993px;top:15px">06.05.25</div><div class="t" style="left:1279px;top:15px">4</div></div>
<svg style="left:341.6px;top:589.8px;overflow:hidden" width="38" height="38" viewBox="0 0 38 38"><rect width="38" height="38" fill="#eeeeee"/><g filter="url(#f4)"><ellipse cx="20" cy="31.500" rx="15" ry="1.800" fill="#dcdcdc"/><path d="M20,10.500 Q25,7 31,7.500 L34.500,9 Q35,15 35,21 L34,25 L24,28 L16,26 Q14,18 20,10.500Z" fill="#e9cfb5"/><path d="M14,14.500 Q19,10 26,10.500 L29.500,12 Q30.500,18 30.500,24 L29.500,28 L15,32.500 Q8.500,33.500 7,30.500 Q2.500,29 4,24.500 Q8,20 14,14.500Z" fill="#efd6bd"/><path d="M4,26.500 Q7,29.500 15,28.500 L30.500,24 L35,21.500 L34.500,25.500 L30,28 L15.500,33 Q8,34 6.500,30.500 Q3.500,29.500 4,26.500Z" fill="#f6f2ec"/><path d="M26,10.500 L29,9 L29.500,12Z M31,7.500 L34,6.500 L34.500,9Z" fill="#c4a88c"/><path d="M9,22 Q15,21 19,16" stroke="#dcc0a4" stroke-width="1" fill="none"/></g></svg>
<div class="row" style="top:631px;height:46px"><div class="tyi" style="top:16px">A</div><div class="t" style="left:431.500px;top:16px">2738340</div><div class="t" style="left:583px;top:16px">/Sortiment/Bekleidung/Damen/Schuhe</div><div class="t" style="left:860px;top:16px">06.05.25</div><div class="t" style="left:993px;top:16px">06.05.25</div><div class="t" style="left:1279px;top:16px">4</div></div>
<svg style="left:341.6px;top:635.5px;overflow:hidden" width="38" height="38" viewBox="0 0 38 38"><rect width="38" height="38" fill="#efeff1"/><g filter="url(#f4)"><ellipse cx="20" cy="31" rx="15" ry="1.800" fill="#dadadc"/><path d="M13,11.500 Q17,8 21,10.500 L24,12.500 Q27,9 31,11 Q34,14 34.500,20 Q35,24 31,25 L22,27 L12,22Z" fill="#f4f4f8"/><path d="M9,17 Q13,13 17,15.500 L21,17.500 Q24,14.500 27.500,16.500 Q30,19.500 30.500,25 Q31,29 27,30 L17,33.500 Q11,34.500 8,32 Q3.500,30 4.500,25.500 Q5,21 9,17Z" fill="#fbfbfd"/><path d="M5,28 Q9,31.500 16,31 L30,26 L34.500,22.500 L34.500,25 L30.500,28.500 L17,34 Q9,35.500 6,31.500Z" fill="#d9d9df"/><path d="M11,20 L15,23 M13.500,18 L17.500,21 M16,16.500 L20,19.500 M24,19 L28,18.500 M9,26 L13,27 M20,13.500 L24,15 M26,12.500 L30,13" stroke="#8f8fb4" stroke-width="1"/><path d="M21,17.500 Q24,16 27,17.500 Q25,20 22,20Z" fill="#c9c9d6"/></g><path d="M2 6.500 h5 M2.500 8 h3" stroke="#888" stroke-width=".7"/></svg>
<div class="row" style="top:677px;height:46px"><div class="tyi" style="top:16px">A</div><div class="t" style="left:431.500px;top:16px">2in1-Edition: Mante...</div><div class="t" style="left:583px;top:16px">/Sortiment/Bekleidung/Herren/Oberteile/Mä...</div><div class="t" style="left:860px;top:16px">06.05.25</div><div class="t" style="left:993px;top:16px">06.05.25</div><div class="t" style="left:1279px;top:16px">3</div></div>
<svg style="left:341.6px;top:681.2px;overflow:hidden" width="25.6" height="38" viewBox="0 0 25.6 38"><defs><linearGradient id="pg1" x1="0" x2="1"><stop offset="0" stop-color="#c8c8ca"/><stop offset="1" stop-color="#dadadc"/></linearGradient></defs><rect width="25.600" height="38" fill="url(#pg1)"/><g filter="url(#f5)"><ellipse cx="14.100" cy="4" rx="2.300" ry="2.900" fill="#94705a"/><path d="M11.700 3.600 Q14.100 -.2 16.600 3.600 L16.300 2.200 Q14.100 .4 12 2.200Z" fill="#33251e"/><path d="M10.300 8.600 Q14.100 6.600 18 8.600 L21.800 10.800 L24 24.500 L22.200 30.500 L21.500 35 L9.800 35.300 L9.600 26 L7 25.500 L5.800 13 Z" fill="#5a683e"/><path d="M13.600 8 L14.600 35" stroke="#46522f" stroke-width=".9"/><path d="M7.500 25.500 Q9 22 10 17" stroke="#46522f" stroke-width="1" fill="none"/><path d="M10.200 35 L10 38 L14 38 L14.200 35.200 Z M15.400 35.200 L15.800 38 L20.600 38 L21 35Z" fill="#1f2124"/></g></svg>
<div class="row" style="top:723px;height:46px"><div class="tyi" style="top:15px">A</div><div class="t" style="left:431.500px;top:15px">Active-Top mit Netz...</div><div class="t" style="left:583px;top:15px">/Sortiment/Bekleidung/Damen/Oberteile/Tops</div><div class="t" style="left:860px;top:15px">06.05.25</div><div class="t" style="left:993px;top:15px">06.05.25</div><div class="t" style="left:1279px;top:15px">3</div></div>
<svg style="left:341.6px;top:726.9px;overflow:hidden" width="25.6" height="38" viewBox="0 0 25.6 38"><rect width="25.600" height="38" fill="url(#pg1)"/><g filter="url(#f5)"><ellipse cx="12.100" cy="4.600" rx="2.300" ry="2.900" fill="#a87d64"/><path d="M9.600 4.800 Q9.400 .8 12.100 .9 Q14.900 .8 14.600 4.800 Q14 2.400 12.100 2.400 Q10.200 2.400 9.600 4.800Z" fill="#2f221c"/><path d="M10.800 7 L13.400 7 L13.600 10 L10.600 10Z" fill="#b78d74"/><path d="M6.500 10.800 Q4.600 12 4.400 17 L4.800 30 L6.600 34 L7.200 30 L7.300 16Z M17.600 10.800 Q19.600 12 19.800 17 L20 30 L20.600 34 L18.600 30 L18 16Z" fill="#c09880"/><path d="M7.800 10.200 L10.200 9.400 Q12.100 11 14 9.400 L16.600 10.200 L18.400 14 L18.800 30.300 L5.400 30.300 L6 14 Z" fill="#ecc3c3"/><path d="M12 11 L12.200 30" stroke="#dcaeb0" stroke-width=".8"/><path d="M5.600 30.200 L18.800 30.200 L19 38 L13.400 38 L12.200 33 L11.200 38 L5.200 38Z" fill="#1b1b20"/></g></svg>
<div class="row" style="top:769px;height:45px"><div class="tyi" style="top:15px">A</div><div class="t" style="left:431.500px;top:15px">Badeanzug im Col...</div><div class="t" style="left:583px;top:15px">/Sortiment/Wäsche/Damen/Badeanzüge</div><div class="t" style="left:860px;top:15px">06.05.25</div><div class="t" style="left:993px;top:15px">06.05.25</div><div class="t" style="left:1279px;top:15px">5</div></div>
<svg style="left:341.6px;top:772.7px;overflow:hidden" width="25.6" height="38" viewBox="0 0 25.6 38"><rect width="25.600" height="38" fill="url(#pg1)"/><g filter="url(#f5)"><ellipse cx="14.600" cy="4.400" rx="2.300" ry="2.900" fill="#a67a5e"/><path d="M12.100 4.800 Q11.900 .8 14.600 .9 Q17.400 .8 17.100 4.800 Q16.500 2.200 14.600 2.200 Q12.700 2.200 12.100 4.800Z" fill="#5b4434"/><path d="M13.400 7 L15.800 7 L16 10 L13.200 10Z" fill="#b3876a"/><path d="M9.800 10.600 Q13 9.400 15 10 Q18.500 9.400 21 11 L21.400 22 L20.400 30 L19.400 24 L10 24 L9 34 L8 30 L8.600 16Z" fill="#b3876a"/><path d="M10 12.200 Q12 11 14.500 13 Q17.500 10.600 20.600 11.800 L21 21 L9.800 21.400 Z" fill="#2aaea6"/><path d="M9.800 20.600 L21 20.400 L20.800 23.600 L9.800 23.800Z" fill="#63d4d4"/><path d="M9.800 23.600 L20.800 23.400 L19.400 28 Q15.500 32.500 11 28Z" fill="#1a2548"/><path d="M10.600 27.500 L10.200 38 L13.800 38 L14.800 31Z M19.600 27.500 L19.400 38 L16 38 L15.400 31Z" fill="#a87c60"/></g></svg>
<div class="row" style="top:814px;height:46px"><div class="tyi" style="top:16px">A</div><div class="t" style="left:431.500px;top:16px">Badeanzug mit abn...</div><div class="t" style="left:583px;top:16px">/Sortiment/Wäsche/Damen/Badeanzüge</div><div class="t" style="left:860px;top:16px">06.05.25</div><div class="t" style="left:993px;top:16px">06.05.25</div><div class="t" style="left:1279px;top:16px">6</div></div>
<svg style="left:341.6px;top:818.4px;overflow:hidden" width="25.6" height="38" viewBox="0 0 25.6 38"><rect width="25.600" height="38" fill="url(#pg1)"/><g filter="url(#f5)"><path d="M4.200 7.200 Q3.400 9 6 11.500 L9.400 14 L10.600 10.500 L7 8 Q5.800 6 4.200 7.200Z" fill="#ad7a5a"/><ellipse cx="12.800" cy="5" rx="2.300" ry="2.900" fill="#a66f50"/><path d="M9.800 5.800 Q9.300 1 12.800 1 Q16.600 1 16 7 L16.400 13 L14.400 10 Q15 5 12.800 3.600 Q10.600 4 10.400 8 L9.600 14.400 L8.800 10Z" fill="#5f3220"/><path d="M10.400 10.400 Q13.500 9.600 16.800 11 L19.600 14 L20.600 24 L19 28 L18.600 18 L9 18Z" fill="#ad7a5a"/><path d="M9.400 13.600 Q13 15.500 17.600 13.400 L18.600 19 L19 27.500 Q13.500 31.500 7.800 28.500 L8.200 22 L9.800 18Z" fill="#5f4f68"/><path d="M10.500 15.500 l1.800 1.600 m2.400 -1 l1 2.400 m-5.200 2 l2.600 1.600 m1.600 -3 l2 3 m-6.200 2.400 l2 1.200 m2.800 -1 l1.600 2.400 m-6 .4 l1.500 .8" stroke="#e4d6e4" stroke-width=".9"/><path d="M11 17 l1 1 m3 1 l1 1 m-5 3 l1 1 m3 2 l1 .5" stroke="#231a2a" stroke-width=".9"/><path d="M8 28 L7.200 38 L11.600 38 L13 31Z M19 27.500 L20.400 38 L15.400 38 L14 31Z" fill="#a8744f"/></g></svg>
<div class="abs" style="left:341.600px;top:863.700px;width:25.600px;height:7px;background:#d6d6d8;overflow:hidden"><div class="abs" style="left:10px;top:1px;width:6px;height:8px;border-radius:3px;background:#7a6a4a;filter:blur(.8px)"></div></div></div>
<div id="right" class="abs" style="left:0;top:0;width:2428px;height:870px;overflow:hidden;clip-path:inset(0 0 0 2143px)"><svg style="left:2162px;top:13px" width="7" height="12" viewBox="0 0 7 12" fill="none" stroke="#7a7a7a" stroke-width="1.4" stroke-linecap="round" stroke-linejoin="round"><path d="M6 .8 L.9 6 L6 11.2"/></svg>
<div class="t" style="left:2212px;top:12px;color:#3a9fd4">Detailansicht</div>
<div class="t" style="left:2300px;top:12px">Produkt Besc...</div>
<svg style="left:2402px;top:13px" width="7" height="12" viewBox="0 0 7 12" fill="none" stroke="#333" stroke-width="1.7" stroke-linecap="round" stroke-linejoin="round"><path d="M1 .8 L6 6 L1 11.2"/></svg>
<div class="abs" style="left:2223px;top:43px;width:91px;height:28px;border-radius:3px;background:#9b9b9b"></div>
<div class="abs" style="left:2231px;top:49.500px;width:15px;height:15px;border-radius:50%;background:#fff"></div>
<svg style="left:2236px;top:54.500px" width="5" height="5" viewBox="0 0 5 5" stroke="#999" stroke-width="1.1" stroke-linecap="round"><path d="M.7 .7 L4.3 4.3 M4.3 .7 L.7 4.3"/></svg>
<div class="t" style="left:2254px;top:50px;color:#fff">Verwerfen</div>
<div class="abs" style="left:2321.500px;top:43px;width:91px;height:28px;border-radius:3px;background:#1bb655"></div>
<svg style="left:2330px;top:52px" width="15" height="11" viewBox="0 0 15 11" fill="none" stroke="#fff" stroke-width="2.3" stroke-linecap="round" stroke-linejoin="round"><path d="M1.4 6 L5.2 9.600 L13.6 1.400"/></svg>
<div class="t" style="left:2353px;top:50px;color:#fff;-webkit-text-stroke:.25px #fff">Speichern</div>
<div class="t" style="left:2351px;top:88px">German</div>
<svg style="left:2396px;top:92px" width="10" height="6" viewBox="0 0 10 6" fill="none" stroke="#333" stroke-width="1.3" stroke-linecap="round" stroke-linejoin="round"><path d="M.8 .8 L5 5.200 L9.200 .8"/></svg>
<div class="abs" style="left:2414px;top:114px;width:14px;height:756px;background:#fafafa"></div>
<div class="abs" style="left:2417px;top:136px;width:9px;height:696px;border-radius:4.500px;background:#8c8c8c"></div>
<svg style="left:2417px;top:122px" width="9" height="6" viewBox="0 0 9 6" fill="#8c8c8c"><path d="M4.5 0.3 L8.8 5 Q8.8 6 8 6 H1 Q.2 6 .2 5 Z"/></svg>
<svg style="left:2417px;top:856px" width="9" height="6" viewBox="0 0 9 6" fill="#8c8c8c"><path d="M4.5 5.7 L8.8 1 Q8.8 0 8 0 H1 Q.2 0 .2 1 Z"/></svg>
<div class="t b" style="left:2158px;top:124px">Produktübersicht</div>
<svg style="left:2386px;top:127px" width="12" height="7" viewBox="0 0 12 7" fill="none" stroke="#333" stroke-width="1.7" stroke-linecap="round" stroke-linejoin="round"><path d="M1 6 L6 1 L11 6"/></svg>
<svg style="left:2270.500px;top:178px" width="7" height="12" viewBox="0 0 7 12" fill="none" stroke="#bdbdbd" stroke-width="1.6" stroke-linecap="round" stroke-linejoin="round"><path d="M6 .8 L1 6 L6 11.2"/></svg>
<div class="abs" style="left:2292px;top:172px;width:55px;height:21px;border:1px solid #333;background:#fff;text-align:center;line-height:19px;font-size:11px">1 | 5</div>
<svg style="left:2362px;top:178px" width="7" height="12" viewBox="0 0 7 12" fill="none" stroke="#333" stroke-width="1.7" stroke-linecap="round" stroke-linejoin="round"><path d="M1 .8 L6 6 L1 11.2"/></svg>
<div class="abs" style="left:2171.500px;top:224.700px;width:214px;height:214px;background:#f3f3f3;border:1px solid #dadada;transform:rotate(8.6deg)"></div>
<div class="abs" style="left:2171.500px;top:224.700px;width:214px;height:214px;background:#f3f3f3;border:1px solid #dadada;transform:rotate(-8.6deg)"></div>
<div class="abs" style="left:2171.500px;top:224.700px;width:214px;height:214px;background:#f3f3f3;border:1px solid #dadada;transform:rotate(3.15deg)"></div>
<div class="abs" style="left:2171.500px;top:224.700px;width:214px;height:214px;background:#f3f3f3;border:1px solid #dadada;transform:rotate(-3.15deg)"></div>
<div class="abs" style="left:2171.500px;top:224.700px;width:214px;height:214px;background:linear-gradient(180deg,#f1f1f1 0%,#efefef 50%,#ebebeb 100%);border:1px solid #d2d2d2;overflow:hidden"><svg style="left:0;top:0" width="214" height="214" viewBox="0 0 214 214">
<defs>
<filter id="sb1" x="-20%" y="-20%" width="140%" height="140%"><feGaussianBlur stdDeviation="14"/></filter>
<filter id="sb2" x="-5%" y="-5%" width="110%" height="110%"><feGaussianBlur stdDeviation="2.2"/></filter>
<filter id="sb3" x="-5%" y="-5%" width="110%" height="110%"><feGaussianBlur stdDeviation="5"/></filter>
<linearGradient id="sg1" x1="0" y1="0" x2="1" y2="1"><stop offset="0" stop-color="#d4d4d4"/><stop offset="1" stop-color="#b6b6b6"/></linearGradient>
<linearGradient id="sg2" x1="0" y1="0" x2="0.6" y2="1"><stop offset="0" stop-color="#d8d8d8"/><stop offset=".55" stop-color="#c9c9c9"/><stop offset="1" stop-color="#b4b4b4"/></linearGradient>
</defs>
<g id="shoeg"><g transform="translate(-1.5,25.3) scale(0.18741)">
<!-- shadows -->
<g filter="url(#sb1)" opacity=".9">
<ellipse cx="640" cy="790" rx="380" ry="30" fill="#cfcfcf"/>
<ellipse cx="930" cy="660" rx="170" ry="35" fill="#d0d0d0"/>
<ellipse cx="170" cy="560" rx="110" ry="22" fill="#c8c8c8"/>
</g>
<g filter="url(#sb2)">
<!-- back shoe -->
<path d="M55,440 C60,400 110,370 160,350 C230,320 300,290 340,250 C400,200 450,160 480,140 C510,110 540,85 560,88 C590,95 610,140 640,170 C700,180 760,120 830,105 C880,100 905,140 912,190 L912,400 L500,560 L220,572 C150,560 70,510 55,440 Z" fill="url(#sg1)"/>
<path d="M52,442 C60,505 130,560 205,578 L300,540 C200,545 100,500 70,440Z" fill="#a9a9a9"/>
<path d="M640,172 C700,188 770,128 830,110 C860,106 882,122 892,145 C850,165 800,205 770,225 C730,222 670,212 640,172Z" fill="#ece9e1"/>
<path d="M830,108 C870,100 905,140 912,200 L880,230 C880,180 860,140 830,120Z" fill="#c4c4c4"/>
<path d="M160,385 C230,340 300,330 330,345 C300,400 240,430 180,420Z M330,420 C380,370 440,360 470,380 C450,440 380,470 340,460Z" fill="#cbcbcb" stroke="#a8a8a8" stroke-width="5"/>
<path d="M110,490 C140,450 190,440 210,470 L215,530" fill="none" stroke="#b0b0b0" stroke-width="4"/>
<!-- back laces -->
<g stroke="#a3a3a3" stroke-width="13" stroke-linecap="round" fill="none">
<path d="M262,338 L420,215"/><path d="M290,300 L400,300"/><path d="M330,262 L360,300"/><path d="M345,245 L440,272"/><path d="M385,212 L440,214"/><path d="M405,200 L430,275"/><path d="M430,178 Q490,160 552,200"/><path d="M470,140 L480,190"/>
</g>
<circle cx="556" cy="204" r="11" fill="#7c7c7c"/>
<!-- front shoe -->
<path d="M190,620 C195,580 240,545 300,520 C380,480 440,440 480,400 C540,340 620,260 690,205 C720,190 760,200 790,230 C820,260 840,290 850,300 C880,300 900,290 935,335 C980,330 1030,300 1050,270 L1065,290 C1085,350 1080,420 1090,470 C1105,520 1100,570 1085,590 C1050,630 980,645 950,640 C920,635 890,620 870,610 C840,640 800,660 780,680 C740,740 700,760 640,775 C560,795 470,795 400,775 C310,745 220,690 190,620Z" fill="url(#sg2)"/>
<!-- tongue -->
<path d="M470,420 C540,340 620,262 690,208 C720,195 760,205 785,235 L640,490 Z" fill="#dedede"/>
<path d="M560,400 L700,250 M590,425 L725,270 M530,380 L670,240" stroke="#c6c6c6" stroke-width="8" fill="none"/>
<!-- collar interior -->
<path d="M850,302 C870,262 920,222 990,196 C1015,190 1035,200 1042,216 C1032,262 1000,312 935,340 C900,336 870,322 850,302Z" fill="#f1eee6"/>
<ellipse cx="945" cy="305" rx="50" ry="22" fill="#f0cfaa" transform="rotate(-25 945 305)" filter="url(#sb3)"/>
<path d="M1040,212 C1062,260 1072,330 1088,430 L1062,415 C1052,340 1040,285 1018,245Z" fill="#a6a6a6"/>
<!-- panels -->
<g fill="#cfcfcf" stroke="#a6a6a6" stroke-width="5">
<path d="M720,440 C760,400 810,400 830,420 C810,480 760,500 730,490Z"/>
<path d="M580,580 C620,540 690,530 710,550 C700,600 640,625 600,620Z"/>
<path d="M340,700 C360,650 430,640 450,680 L440,740 C400,745 360,730 340,700Z"/>
<path d="M920,440 C960,400 1040,390 1075,420 L1080,470 C1030,470 960,480 925,500Z" fill="#c6c6c6"/>
</g>
<path d="M240,570 C300,540 400,500 470,470 M360,580 L470,500 M850,300 C880,360 900,420 880,520 C860,560 800,600 780,640 M700,500 C760,520 840,520 880,480" fill="none" stroke="#a2a2a2" stroke-width="5"/>
<path d="M200,640 C300,720 420,760 560,760 C660,750 740,700 800,640 L780,680 C740,740 700,760 640,775 C560,795 470,795 400,775 C310,745 220,690 200,640Z" fill="#b9b9b9" opacity=".7" filter="url(#sb3)"/>
<path d="M880,520 C940,560 1040,540 1090,480 L1096,560 C1050,620 960,640 880,600Z" fill="#b5b5b5" opacity=".7" filter="url(#sb3)"/>
<path d="M70,450 C120,520 200,540 300,520 L220,572 C150,560 90,520 70,450Z" fill="#b4b4b4" opacity=".7" filter="url(#sb3)"/>
<!-- soles -->
<path d="M186,622 C220,700 320,758 420,783 C520,803 640,788 720,743 C760,713 790,668 870,612 L882,640 C830,670 790,722 740,762 C660,802 520,817 410,797 C300,772 200,702 183,642Z" fill="#9c9c9c"/>
<path d="M868,612 C900,632 950,647 1000,636 C1050,622 1090,592 1098,540 L1102,572 C1090,612 1040,642 980,652 C930,652 890,642 868,628Z" fill="#9e9e9e"/>
<path d="M900,560 C960,590 1040,570 1085,520" fill="none" stroke="#b4b4b4" stroke-width="10"/>
<!-- front laces -->
<g stroke="#a0a0a0" stroke-width="14" stroke-linecap="round" fill="none">
<path d="M470,410 L640,478"/><path d="M500,500 L560,400"/><path d="M510,375 L600,360"/><path d="M560,455 L680,285"/><path d="M590,300 L660,430"/><path d="M560,325 L700,395"/><path d="M600,290 Q690,280 782,330"/><path d="M630,250 L700,330"/>
</g>
<circle cx="790" cy="336" r="12" fill="#777"/>
</g>
</g></g>
</svg>
</div>
<div class="t b" style="left:2158px;top:475px">Identität</div>
<div class="t" style="left:2252px;top:475px;max-width:146px;overflow:hidden">87831</div>
<div class="t b" style="left:2158px;top:509px">Name</div>
<div class="t" style="left:2252px;top:509px;max-width:146px;overflow:hidden">1096706</div>
<div class="t b" style="left:2158px;top:542px">Typ</div>
<div class="t" style="left:2252px;top:542px;max-width:146px;overflow:hidden">Article</div>
<div class="t b" style="left:2158px;top:575.5px">Klassifikati<span style="letter-spacing:.65px">...</span></div>
<div class="t" style="left:2252px;top:575.5px;max-width:146px;overflow:hidden">/Sortiment/Bekleidung/Herren/Schuhe</div>
<div class="t b" style="left:2158px;top:609px">Marke</div>
<div class="t" style="left:2252px;top:609px;max-width:146px;overflow:hidden">BÄR</div>
<div class="t b" style="left:2200.8px;top:609.5px;color:#e8734a;font-size:10.500px">*</div>
<svg style="left:2208.5px;top:607px" width="19" height="16" viewBox="0 0 19 16" fill="none" stroke="#444" stroke-width="2.1"><rect x="1.2" y="6.300" width="10.200" height="6.800" rx="3.400" transform="rotate(-30 6.300 9.700)"/><rect x="7.600" y="2.900" width="10.200" height="6.800" rx="3.400" transform="rotate(-30 12.700 6.300)"/></svg>
<div class="t b" style="left:2158px;top:642px">Produ<span style="letter-spacing:.65px">...</span></div>
<div class="t" style="left:2252px;top:642px;max-width:146px;overflow:hidden">1096</div>
<div class="t b" style="left:2217.8px;top:642.5px;color:#e8734a;font-size:10.500px">*</div>
<svg style="left:2225.5px;top:640px" width="19" height="16" viewBox="0 0 19 16" fill="none" stroke="#444" stroke-width="2.1"><rect x="1.2" y="6.300" width="10.200" height="6.800" rx="3.400" transform="rotate(-30 6.300 9.700)"/><rect x="7.600" y="2.900" width="10.200" height="6.800" rx="3.400" transform="rotate(-30 12.700 6.300)"/></svg>
<div class="t b" style="left:2158px;top:675px">Releas<span style="letter-spacing:.65px">...</span></div>
<svg style="left:2225.5px;top:673px" width="19" height="16" viewBox="0 0 19 16" fill="none" stroke="#444" stroke-width="2.1"><rect x="1.2" y="6.300" width="10.200" height="6.800" rx="3.400" transform="rotate(-30 6.300 9.700)"/><rect x="7.600" y="2.900" width="10.200" height="6.800" rx="3.400" transform="rotate(-30 12.700 6.300)"/></svg>
<div class="abs" style="left:2252px;top:671.500px;width:14px;height:14px;border:1px solid #c4c4c4;border-radius:2px;background:#fff"></div>
<div class="t b" style="left:2158px;top:709px">Produk<span style="letter-spacing:.65px">...</span></div>
<svg style="left:2225.5px;top:707px" width="19" height="16" viewBox="0 0 19 16" fill="none" stroke="#444" stroke-width="2.1"><rect x="1.2" y="6.300" width="10.200" height="6.800" rx="3.400" transform="rotate(-30 6.300 9.700)"/><rect x="7.600" y="2.900" width="10.200" height="6.800" rx="3.400" transform="rotate(-30 12.700 6.300)"/></svg>
<div class="sel2" style="top:701.6px">Neu (default)</div><svg style="left:2380px;top:712.6px" width="10" height="6" viewBox="0 0 10 6" fill="none" stroke="#b0b0b0" stroke-width="1.2" stroke-linecap="round" stroke-linejoin="round"><path d="M.8 .8 L5 5 L9.200 .8"/></svg>
<div class="t b" style="left:2158px;top:747px">Produk<span style="letter-spacing:.65px">...</span></div>
<svg style="left:2225.5px;top:745px" width="19" height="16" viewBox="0 0 19 16" fill="none" stroke="#444" stroke-width="2.1"><rect x="1.2" y="6.300" width="10.200" height="6.800" rx="3.400" transform="rotate(-30 6.300 9.700)"/><rect x="7.600" y="2.900" width="10.200" height="6.800" rx="3.400" transform="rotate(-30 12.700 6.300)"/></svg>
<div class="sel2" style="top:740px">Rohdaten (default)</div><svg style="left:2380px;top:751px" width="10" height="6" viewBox="0 0 10 6" fill="none" stroke="#b0b0b0" stroke-width="1.2" stroke-linecap="round" stroke-linejoin="round"><path d="M.8 .8 L5 5 L9.200 .8"/></svg>
<div class="t b" style="left:2158px;top:785px">Sta<span style="letter-spacing:.65px">...</span></div>
<div class="t b" style="left:2200.8px;top:785.5px;color:#e8734a;font-size:10.500px">*</div>
<svg style="left:2225.5px;top:783px" width="19" height="16" viewBox="0 0 19 16" fill="none" stroke="#444" stroke-width="2.1"><rect x="1.2" y="6.300" width="10.200" height="6.800" rx="3.400" transform="rotate(-30 6.300 9.700)"/><rect x="7.600" y="2.900" width="10.200" height="6.800" rx="3.400" transform="rotate(-30 12.700 6.300)"/></svg>
<div class="sel2" style="top:778.2px">0 - kein Text vorhan...</div><svg style="left:2380px;top:789.2px" width="10" height="6" viewBox="0 0 10 6" fill="none" stroke="#b0b0b0" stroke-width="1.2" stroke-linecap="round" stroke-linejoin="round"><path d="M.8 .8 L5 5 L9.200 .8"/></svg>
<svg style="left:2208px;top:785px" width="13" height="14" viewBox="0 0 13 14"><path d="M1.2 .8 V13.600" stroke="#222" stroke-width="1.7" stroke-linecap="round"/><path d="M2 1.600 Q4.500 .4 6.500 1.600 T12.400 1.400 V9 Q9.500 10.400 7 9.200 T2 9.400 Z" fill="#222"/></svg>
<div class="hline" style="left:2143px;top:816px;width:271px"></div>
<div class="t b" style="left:2158px;top:827px">Produkteigenschaften</div>
<svg style="left:2386px;top:831px" width="12" height="7" viewBox="0 0 12 7" fill="none" stroke="#333" stroke-width="1.7" stroke-linecap="round" stroke-linejoin="round"><path d="M1 1 L6 6 L11 1"/></svg>
<div class="hline" style="left:2143px;top:852px;width:271px"></div>
<div class="t b" style="left:2158px;top:861.500px">Verwendungen</div>
<svg style="left:2386px;top:866px" width="12" height="7" viewBox="0 0 12 7" fill="none" stroke="#333" stroke-width="1.7" stroke-linecap="round" stroke-linejoin="round"><path d="M1 1 L6 6 L11 1"/></svg></div>
</body>
</html>
